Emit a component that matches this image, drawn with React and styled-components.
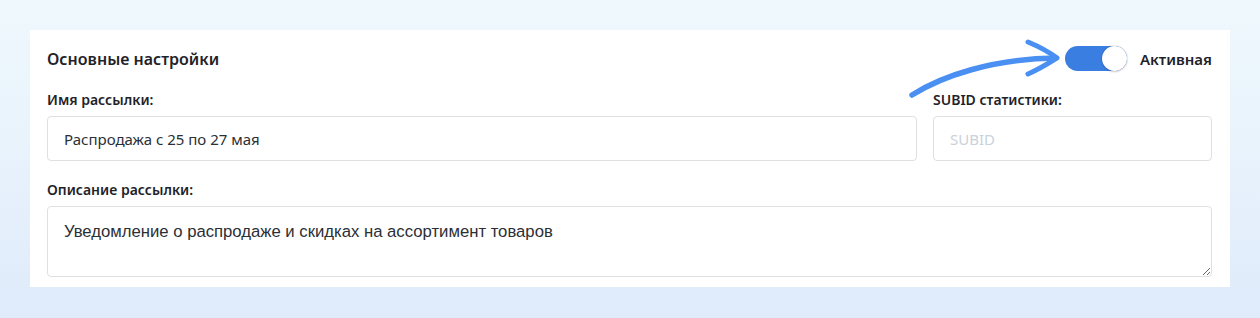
import React from 'react';
import styled, { createGlobalStyle } from 'styled-components';

const GlobalStyle = createGlobalStyle`
  html, body {
    margin: 0;
    padding: 0;
  }
  body {
    width: 1260px;
    height: 318px;
    background: linear-gradient(180deg, #eff8fd 0%, #e9f3fc 45%, #dfeafb 100%);
    font-family: "Noto Sans", "Open Sans", sans-serif;
    color: #1f2329;
  }
`;

const Page = styled.div`
  padding: 30px 30px 31px 30px;
`;

const Card = styled.section`
  position: relative;
  box-sizing: border-box;
  width: 1200px;
  height: 257px;
  background: #ffffff;
  padding: 16px 18px 0 17px;
`;

const Header = styled.div`
  display: flex;
  align-items: center;
  justify-content: space-between;
  height: 25px;
`;

const Title = styled.h2`
  margin: 0;
  font-size: 16px;
  font-weight: 600;
  color: #1f2329;
`;

const StatusBox = styled.div`
  display: flex;
  align-items: center;
  gap: 13px;
`;

const Toggle = styled.div`
  position: relative;
  width: 62px;
  height: 25px;
  border-radius: 13px;
  background: ${({ $on }) => ($on ? '#3a7ee2' : '#d7dbe0')};
`;

const Knob = styled.div`
  position: absolute;
  top: 0;
  left: ${({ $on }) => ($on ? '37px' : '0')};
  width: 25px;
  height: 25px;
  border-radius: 50%;
  background: #ffffff;
  box-shadow: 0 0 2px rgba(0, 0, 0, 0.25), 0 1px 2px rgba(0, 0, 0, 0.15);
`;

const StatusText = styled.span`
  font-size: 15px;
  font-weight: 600;
  color: #1f2329;
`;

const FieldsRow = styled.div`
  display: grid;
  grid-template-columns: 870px 279px;
  column-gap: 16px;
  margin-top: 20px;
`;

const Field = styled.div`
  display: flex;
  flex-direction: column;
`;

const Label = styled.label`
  font-size: 14px;
  font-weight: 600;
  color: #1f2329;
  line-height: 18px;
  margin-bottom: 7px;
`;

const Input = styled.input`
  box-sizing: border-box;
  height: 45px;
  border: 1px solid #e0e0e0;
  border-radius: 4px;
  padding: 0 16px;
  font-family: "Noto Sans", "Open Sans", sans-serif;
  font-size: 15px;
  color: #2b2f36;
  outline: none;

  &::placeholder {
    color: #c9d1dc;
  }
`;

const DescField = styled(Field)`
  margin-top: 20px;
`;

const TextArea = styled.textarea`
  box-sizing: border-box;
  width: 1165px;
  height: 71px;
  border: 1px solid #e0e0e0;
  border-radius: 4px;
  padding: 15px 16px;
  font-family: "Liberation Sans", Arial, sans-serif;
  font-size: 16.7px;
  color: #2b2f36;
  outline: none;
  resize: vertical;
`;

const Arrow = styled.svg`
  position: absolute;
  left: 872px;
  top: 2px;
  overflow: visible;
`;

export default function App() {
  return (
    <>
      <GlobalStyle />
      <Page>
        <Card>
          <Header>
            <Title>Основные настройки</Title>
            <StatusBox>
              <Toggle $on>
                <Knob $on />
              </Toggle>
              <StatusText>Активная</StatusText>
            </StatusBox>
          </Header>
          <FieldsRow>
            <Field>
              <Label>Имя рассылки:</Label>
              <Input defaultValue="Распродажа с 25 по 27 мая" />
            </Field>
            <Field>
              <Label>SUBID статистики:</Label>
              <Input placeholder="SUBID" />
            </Field>
          </FieldsRow>
          <DescField>
            <Label>Описание рассылки:</Label>
            <TextArea defaultValue="Уведомление о распродаже и скидках на ассортимент товаров" />
          </DescField>
          <Arrow width="160" height="70" viewBox="0 0 160 70">
            <path
              d="M10 63 C 40 44, 90 27, 154 26"
              fill="none"
              stroke="#4a8ff2"
              strokeWidth="5.5"
              strokeLinecap="round"
            />
            <path
              d="M126 10 C 138 15, 147 20, 155 26 C 147 31, 138 37, 126 42"
              fill="none"
              stroke="#4a8ff2"
              strokeWidth="5"
              strokeLinecap="round"
              strokeLinejoin="round"
            />
          </Arrow>
        </Card>
      </Page>
    </>
  );
}
